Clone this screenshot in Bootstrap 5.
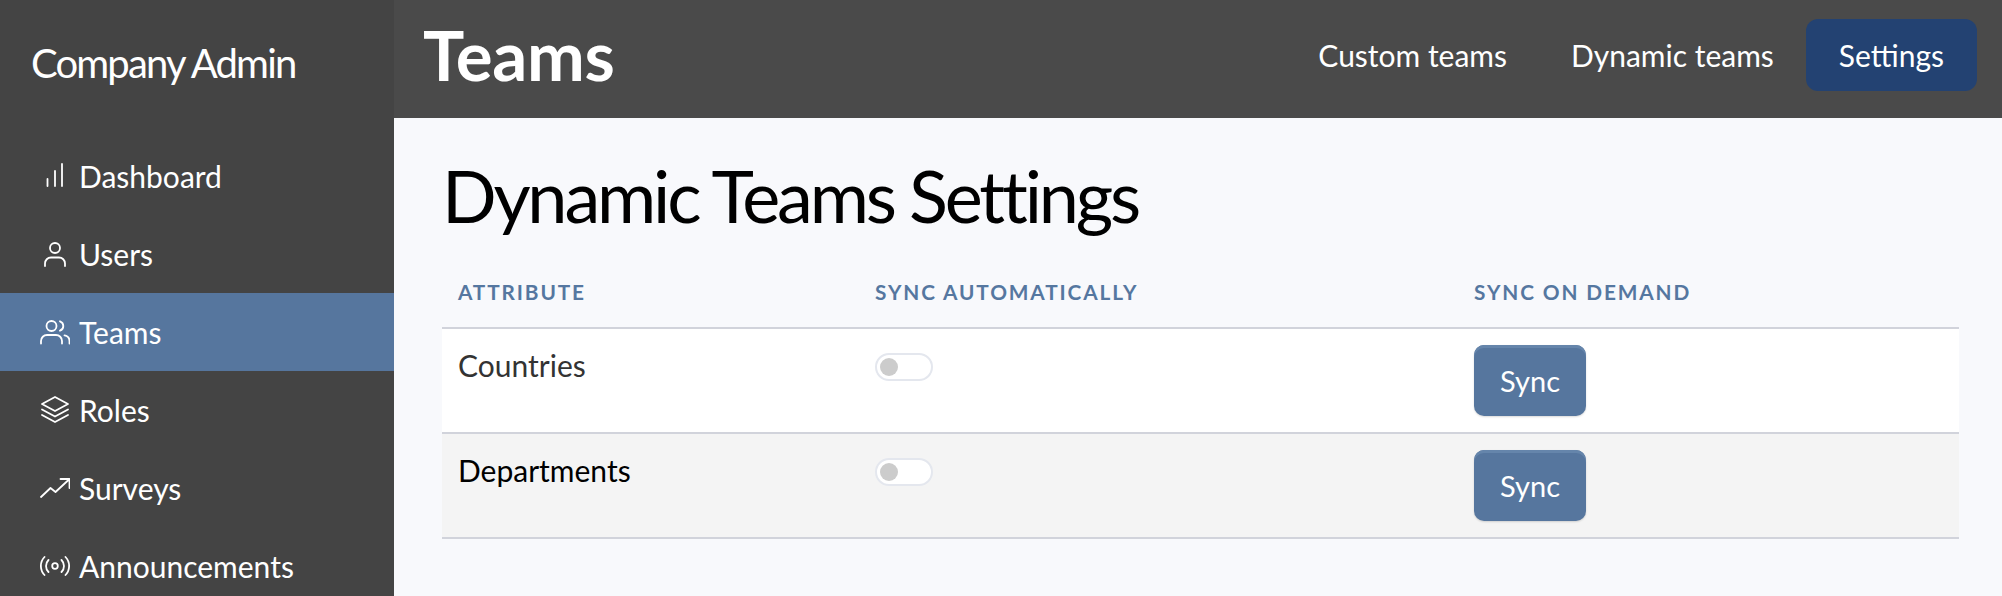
<!DOCTYPE html>
<html lang="en">
<head>
<meta charset="utf-8">
<title>Teams</title>
<link href="https://cdn.jsdelivr.net/npm/bootstrap@5.3.0/dist/css/bootstrap.min.css" rel="stylesheet">
<style>
html,body{height:100%;}
body{font-family:"Lato",sans-serif;background:#f8f9fc;overflow:hidden;}
.shell{height:596px;}
.side{width:394px;background:#444;flex:none;color:#fff;}
.brand-name{height:118px;flex:none;padding:7px 0 0 31px;font-size:40px;letter-spacing:-1.85px;color:#fff;}
.side-menu{padding-top:19px;flex:none;flex-wrap:nowrap;}
.side-menu .nav-link{height:78px;flex:none;padding:0 0 0 40px;color:#fff;font-size:30px;gap:9px;border-radius:0;}
.side-menu .nav-link.active{background:#56769e;color:#fff;}
.side-menu .nav-link span{position:relative;top:1px;}
.mi{width:30px;height:30px;flex:none;fill:none;stroke:#fff;stroke-width:1.8;stroke-linecap:round;stroke-linejoin:round;}
.topbar{height:118px;flex:none;background:#4a4a4a;padding:0 25px 8px 29px;}
.topbar h1{font-size:69px;font-weight:700;color:#fff;margin:0;letter-spacing:-.3px;}
.top-tabs .nav-link{height:72px;padding:0 32px;color:#fff;font-size:30px;border-radius:12px;}
.top-tabs .nav-link.active{background:#234272;color:#fff;padding:0 33px;}
.pane{padding:0 43px 0 48px;}
.pane h2{font-size:72px;font-weight:400;color:#000;margin:34px 0 0;line-height:86px;letter-spacing:-3.15px;height:106px;}
.grid-tbl{table-layout:fixed;margin:0;width:100%;--bs-table-bg:transparent;}
.grid-tbl th{font-size:20.8px;font-weight:700;letter-spacing:.09em;text-transform:uppercase;color:#5577a0;padding:0 16px 1px;height:70px;vertical-align:middle;border-bottom:2px solid #d1d3db;}
.grid-tbl td{font-size:30px;height:105px;padding:18px 16px 0;vertical-align:top;border-bottom:2px solid #d1d3db;line-height:36px;}
.grid-tbl .c1{width:417px;}
.grid-tbl .c2{width:599px;}
.row-a td{background:#fff;color:#333;}
.row-b td{background:#f4f4f4;color:#000;}
.row-a .cell-btn,.row-b .cell-btn{padding-top:16px;}
.switch-wrap{margin:0;padding:0;min-height:0;}
.switch-wrap .form-check-input{width:58px;height:28px;margin:6px 0 0;border:2px solid #e4e7ee;background-color:#fff;background-image:url("data:image/svg+xml,%3csvg xmlns='http://www.w3.org/2000/svg' viewBox='-4 -4 8 8'%3e%3ccircle r='3' fill='%23ccc'/%3e%3c/svg%3e");float:none;display:block;}
.sync-btn{width:112px;height:71px;padding:0;font-size:29px;color:#fff;background:#56769e;border:0;border-radius:10px;box-shadow:inset 0 3px 0 #6585ab,0 1px 2px rgba(0,0,0,.15);}
.sync-btn:hover{color:#fff;background:#56769e;}
</style>
</head>
<body>
<div class="d-flex shell">
  <aside class="side d-flex flex-column">
    <div class="brand-name d-flex align-items-center">Company Admin</div>
    <nav class="nav flex-column side-menu">
      <a class="nav-link d-flex align-items-center" href="#"><svg class="mi" viewBox="0 0 30 30"><path d="M22 3v22M15 10v15M7.500 18v7"/></svg>Dashboard</a>
      <a class="nav-link d-flex align-items-center" href="#"><svg class="mi" viewBox="0 0 30 30"><circle cx="15" cy="9" r="5"/><path d="M5 27v-2.500A6 6 0 0 1 11 18.500h8a6 6 0 0 1 6 6V27"/></svg>Users</a>
      <a class="nav-link active d-flex align-items-center" href="#"><svg class="mi" viewBox="0 0 30 30"><circle cx="11.500" cy="9" r="5"/><path d="M1 26.500V24a6 6 0 0 1 6-6h9a6 6 0 0 1 6 6v2.500M20 4.300a5 5 0 0 1 0 9.400M24.500 18.300a6 6 0 0 1 5 5.700v2.500"/></svg>Teams</a>
      <a class="nav-link d-flex align-items-center" href="#"><svg class="mi" viewBox="0 0 30 30"><path d="M15 2 2 9l13 7 13-7zM2 14.500l13 7 13-7M2 20l13 7 13-7"/></svg>Roles</a>
      <a class="nav-link d-flex align-items-center" href="#"><svg class="mi" viewBox="0 0 30 30"><path d="M1 24l9.500-9 5 4L29 6.500M20.500 6H29.500v9"/></svg>Surveys</a>
      <a class="nav-link d-flex align-items-center" href="#"><svg class="mi" viewBox="0 0 30 30"><circle cx="15" cy="15" r="2.800"/><path d="M8.500 9a8.500 8.500 0 0 0 0 12M21.500 9a8.500 8.500 0 0 1 0 12M4.500 6a13 13 0 0 0 0 18M25.500 6a13 13 0 0 1 0 18"/></svg>Announcements</a>
    </nav>
  </aside>
  <main class="flex-grow-1 d-flex flex-column">
    <header class="topbar d-flex align-items-center justify-content-between">
      <h1>Teams</h1>
      <nav class="nav nav-pills top-tabs">
        <a class="nav-link d-flex align-items-center" href="#">Custom teams</a>
        <a class="nav-link d-flex align-items-center" href="#">Dynamic teams</a>
        <a class="nav-link active d-flex align-items-center" href="#">Settings</a>
      </nav>
    </header>
    <section class="pane">
      <h2>Dynamic Teams Settings</h2>
      <table class="table grid-tbl">
        <thead>
          <tr><th class="c1">Attribute</th><th class="c2">Sync automatically</th><th>Sync on demand</th></tr>
        </thead>
        <tbody>
          <tr class="row-a">
            <td>Countries</td>
            <td><div class="form-check form-switch switch-wrap"><input class="form-check-input" type="checkbox" role="switch" aria-label="Sync Countries automatically"></div></td>
            <td class="cell-btn"><button class="btn sync-btn" type="button">Sync</button></td>
          </tr>
          <tr class="row-b">
            <td>Departments</td>
            <td><div class="form-check form-switch switch-wrap"><input class="form-check-input" type="checkbox" role="switch" aria-label="Sync Departments automatically"></div></td>
            <td class="cell-btn"><button class="btn sync-btn" type="button">Sync</button></td>
          </tr>
        </tbody>
      </table>
    </section>
  </main>
</div>
<script src="https://cdn.jsdelivr.net/npm/bootstrap@5.3.0/dist/js/bootstrap.bundle.min.js"></script>
</body>
</html>
